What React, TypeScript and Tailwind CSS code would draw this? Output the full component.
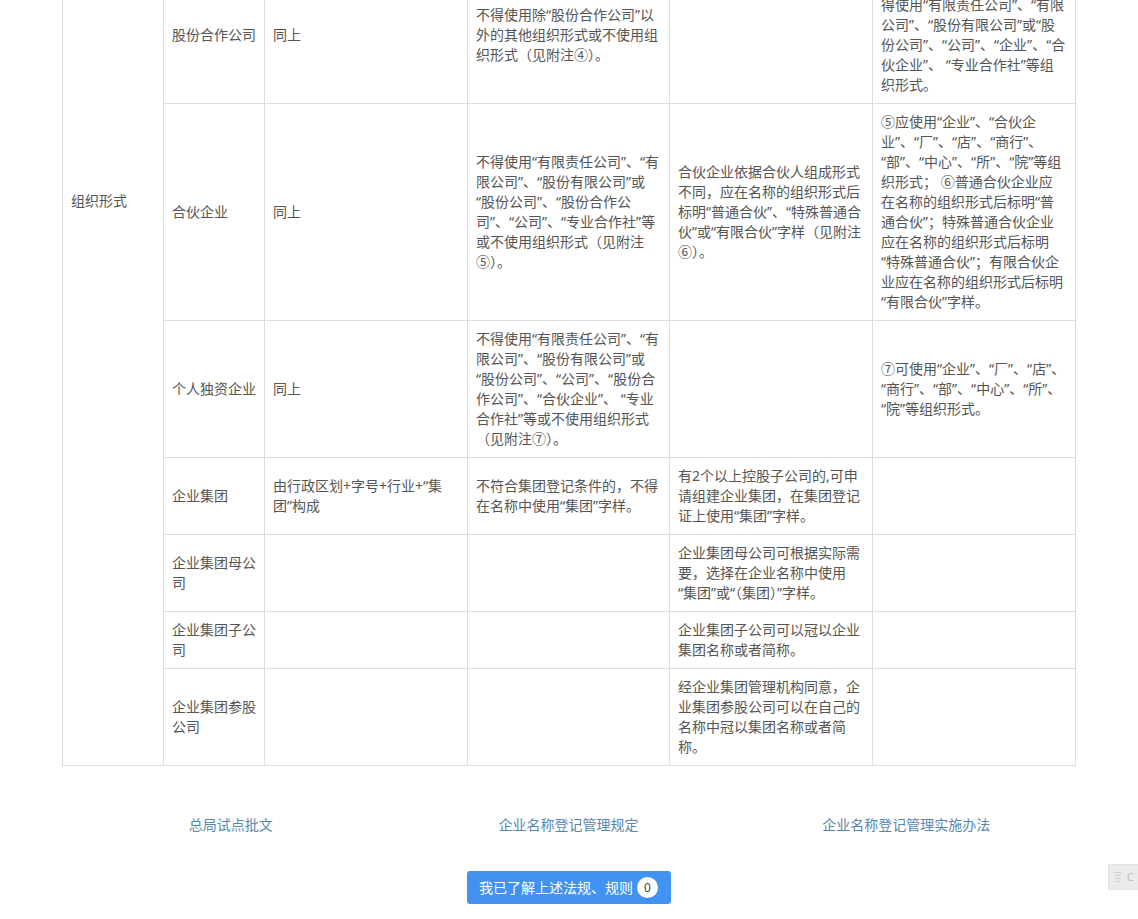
import React from "react";

type Row = {
  name: string[];
  rule: string[];
  forbid: string[];
  note: string[];
  extra: string[];
};

const rows: Row[] = [
  {
    name: ["股份合作公司"],
    rule: ["同上"],
    forbid: ["不得使用除“股份合作公司”以", "外的其他组织形式或不使用组", "织形式（见附注④）。"],
    note: [],
    extra: [
      "④应使用“股份合作公司”，不",
      "得使用“有限责任公司”、“有限",
      "公司”、“股份有限公司”或“股",
      "份公司”、“公司”、“企业”、“合",
      "伙企业”、 “专业合作社”等组",
      "织形式。",
    ],
  },
  {
    name: ["合伙企业"],
    rule: ["同上"],
    forbid: [
      "不得使用“有限责任公司”、“有",
      "限公司”、“股份有限公司”或",
      "“股份公司”、“股份合作公",
      "司”、“公司”、“专业合作社”等",
      "或不使用组织形式（见附注",
      "⑤）。",
    ],
    note: [
      "合伙企业依据合伙人组成形式",
      "不同，应在名称的组织形式后",
      "标明“普通合伙”、“特殊普通合",
      "伙”或“有限合伙”字样（见附注",
      "⑥）。",
    ],
    extra: [
      "⑤应使用“企业”、“合伙企",
      "业”、“厂”、“店”、“商行”、",
      "“部”、“中心”、“所”、“院”等组",
      "织形式； ⑥普通合伙企业应",
      "在名称的组织形式后标明“普",
      "通合伙”；特殊普通合伙企业",
      "应在名称的组织形式后标明",
      "“特殊普通合伙”；有限合伙企",
      "业应在名称的组织形式后标明",
      "“有限合伙”字样。",
    ],
  },
  {
    name: ["个人独资企业"],
    rule: ["同上"],
    forbid: [
      "不得使用“有限责任公司”、“有",
      "限公司”、“股份有限公司”或",
      "“股份公司”、“公司”、“股份合",
      "作公司”、“合伙企业”、 “专业",
      "合作社”等或不使用组织形式",
      "（见附注⑦）。",
    ],
    note: [],
    extra: ["⑦可使用“企业”、“厂”、“店”、", "“商行”、“部”、“中心”、“所”、", "“院”等组织形式。"],
  },
  {
    name: ["企业集团"],
    rule: ["由行政区划+字号+行业+“集", "团”构成"],
    forbid: ["不符合集团登记条件的，不得", "在名称中使用“集团”字样。"],
    note: ["有2个以上控股子公司的,可申", "请组建企业集团，在集团登记", "证上使用“集团”字样。"],
    extra: [],
  },
  {
    name: ["企业集团母公", "司"],
    rule: [],
    forbid: [],
    note: ["企业集团母公司可根据实际需", "要，选择在企业名称中使用", "“集团”或“（集团）”字样。"],
    extra: [],
  },
  {
    name: ["企业集团子公", "司"],
    rule: [],
    forbid: [],
    note: ["企业集团子公司可以冠以企业", "集团名称或者简称。"],
    extra: [],
  },
  {
    name: ["企业集团参股", "公司"],
    rule: [],
    forbid: [],
    note: ["经企业集团管理机构同意，企", "业集团参股公司可以在自己的", "名称中冠以集团名称或者简", "称。"],
    extra: [],
  },
];

function Cell({ lines }: { lines: string[] }) {
  return (
    <td className="border border-[#dddddd] px-2 py-2 align-middle text-[14px] leading-5 text-[#555555] overflow-hidden">
      {lines.map((l, i) => (
        <div key={i} className="whitespace-nowrap">
          {l}
        </div>
      ))}
    </td>
  );
}

export default function App() {
  return (
    <div
      className="w-[1138px] h-[919px] overflow-hidden bg-white relative"
      style={{ fontFamily: '"Noto Sans", "Noto Sans CJK SC", sans-serif' }}
    >
      <div className="w-[1013px] ml-[62px] mt-[-34px]">
        <table className="w-[1013px] table-fixed border-collapse">
          <colgroup>
            <col className="w-[101px]" />
            <col className="w-[101px]" />
            <col className="w-[203px]" />
            <col className="w-[202px]" />
            <col className="w-[203px]" />
            <col className="w-[203px]" />
          </colgroup>
          <tbody>
            {rows.map((r, i) => (
              <tr key={i}>
                {i === 0 && (
                  <td
                    rowSpan={rows.length}
                    className="border border-[#dddddd] px-2 pt-[224px] align-top text-[14px] leading-5 text-[#555555]"
                  >
                    组织形式
                  </td>
                )}
                <Cell lines={r.name} />
                <Cell lines={r.rule} />
                <Cell lines={r.forbid} />
                <Cell lines={r.note} />
                <Cell lines={r.extra} />
              </tr>
            ))}
          </tbody>
        </table>

        <div className="grid grid-cols-3 mt-[49px] text-[14px] leading-5 text-[#5887ad] text-center">
          <a className="cursor-pointer">总局试点批文</a>
          <a className="cursor-pointer">企业名称登记管理规定</a>
          <a className="cursor-pointer">企业名称登记管理实施办法</a>
        </div>

        <div className="flex justify-center mt-[36px]">
          <button className="h-[33px] w-[204px] rounded-[3px] bg-[#4292f2] text-white text-[14px] flex items-center justify-center gap-[4px]">
            <span>我已了解上述法规、规则</span>
            <span className="w-[21px] h-[21px] rounded-full bg-white text-[#444] text-[12px] flex items-center justify-center leading-none">
              0
            </span>
          </button>
        </div>
      </div>

      <div className="absolute left-[1108px] top-[864px] w-[40px] h-[26px] bg-[#ebebeb] border border-[#e2e2e2] flex items-center pl-[6px] gap-[6px]">
        <div className="flex flex-col gap-[2px]">
          <div className="w-[6px] h-[1px] bg-[#cfcfcf]" />
          <div className="w-[6px] h-[1px] bg-[#cfcfcf]" />
          <div className="w-[6px] h-[1px] bg-[#cfcfcf]" />
          <div className="w-[6px] h-[1px] bg-[#cfcfcf]" />
        </div>
        <span className="text-[10px] text-[#bbbbbb] leading-none">C</span>
      </div>
    </div>
  );
}
